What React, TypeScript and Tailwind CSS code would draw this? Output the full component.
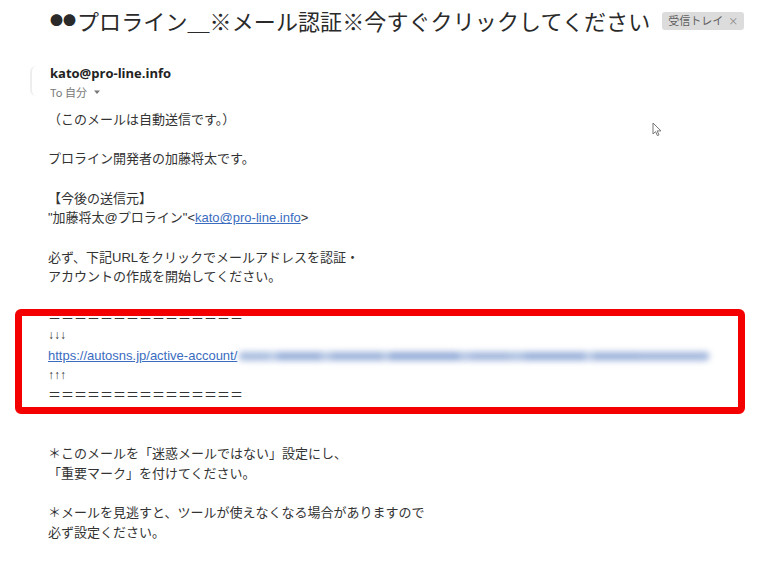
import React from 'react'

const jp = { fontFamily: '"Noto Sans CJK JP", "Noto Sans", sans-serif' }
const body = { fontFamily: '"Liberation Sans", "Noto Sans CJK JP", sans-serif' }

// ぼかしたURLの断片（幅, 濃さ）
const smudge: [number, number][] = [
  [30, 0.35], [8, 0.15], [44, 0.5], [10, 0.2], [52, 0.45], [6, 0.15], [70, 0.55],
  [12, 0.25], [38, 0.4], [16, 0.3], [60, 0.5], [8, 0.15], [46, 0.45], [70, 0.4],
]

export default function App() {
  const blank = <div className="h-[19.67px]" />

  return (
    <div className="relative w-[770px] h-[563px] bg-white overflow-hidden">
      {/* 件名 */}
      <div className="h-[40px] pl-[50px] flex items-center gap-[12px]">
        <h1
          className="flex items-center text-[22px] text-[#2a2a2a] leading-[30px] whitespace-nowrap tracking-[0.1px]"
          style={jp}
        >
          <span className="text-[13px] tracking-[0px] mr-[1px]">●●</span>
          プロライン＿※メール認証※今すぐクリックしてください
        </h1>
        <span
          className="mt-[1px] h-[18px] px-[6px] flex items-center gap-[5px] rounded-[3px] bg-[#dcdcdc] text-[11px] text-[#5f5f5f]"
          style={jp}
        >
          受信トレイ<span className="text-[10px] text-[#888]">×</span>
        </span>
      </div>

      {/* 差出人 */}
      <div className="mt-[24px] flex">
        <div className="ml-[30px] mt-[2px] w-[6px] h-[30px] border-l-2 border-[#eee] rounded-l-full" />
        <div className="ml-[14px]">
          <div className="text-[13px] leading-[18px] font-bold text-[#222]" style={{ fontFamily: '"Open Sans", "Noto Sans", sans-serif' }}>
            kato@pro-line.info
          </div>
          <div className="mt-[2px] flex items-center gap-[3px] text-[11px] leading-[16px] text-[#777]" style={jp}>
            To 自分
            <svg width="10" height="10" viewBox="0 0 10 10" className="ml-[2px]">
              <path d="M2 3.5h6L5 7z" fill="#777" />
            </svg>
          </div>
        </div>
      </div>

      {/* 本文 */}
      <div className="mt-[10px] pl-[48px] text-[13px] leading-[19.67px] text-[#333]" style={body}>
        <div>（このメールは自動送信です。）</div>
        {blank}
        <div>プロライン開発者の加藤将太です。</div>
        {blank}
        <div>【今後の送信元】</div>
        <div>
          "加藤将太@プロライン"&lt;<span className="text-[#3a6cc0] underline">kato@pro-line.info</span>&gt;
        </div>
        {blank}
        <div>必ず、下記URLをクリックでメールアドレスを認証・</div>
        <div>アカウントの作成を開始してください。</div>
        {blank}
        <div>＝＝＝＝＝＝＝＝＝＝＝＝＝＝＝</div>
        <div className="text-[12px]">↓↓↓</div>
        <div className="flex items-center whitespace-nowrap">
          <span className="text-[#3a6cc0] underline">https://autosns.jp/active-account/</span>
          <div className="relative ml-[2px] w-[470px] h-[12px] blur-[3px]">
            <div className="absolute inset-x-0 top-[2px] h-[9px] rounded-full bg-[#a9bde0] opacity-60" />
            <div className="relative flex items-center h-full">
              {smudge.map(([w, o], i) => (
                <div key={i} className="h-[8px] bg-[#5f83c4]" style={{ width: w, opacity: o }} />
              ))}
            </div>
          </div>
        </div>
        <div className="text-[12px]">↑↑↑</div>
        <div>＝＝＝＝＝＝＝＝＝＝＝＝＝＝＝</div>
        {blank}
        {blank}
        <div>＊このメールを「迷惑メールではない」設定にし、</div>
        <div>「重要マーク」を付けてください。</div>
        {blank}
        <div>＊メールを見逃すと、ツールが使えなくなる場合がありますので</div>
        <div>必ず設定ください。</div>
      </div>

      {/* 強調枠 */}
      <div className="absolute left-[15px] top-[309px] w-[730px] h-[105px] border-[7px] border-[#f40000] rounded-[6px]" />

      {/* カーソル */}
      <svg className="absolute left-[652px] top-[122px]" width="10" height="15" viewBox="0 0 10 15">
        <path d="M1 1v11l2.6-2.4 1.8 4 1.6-.7-1.8-4H9z" fill="#fff" stroke="#777" strokeWidth="1" strokeLinejoin="round" />
      </svg>
    </div>
  )
}
